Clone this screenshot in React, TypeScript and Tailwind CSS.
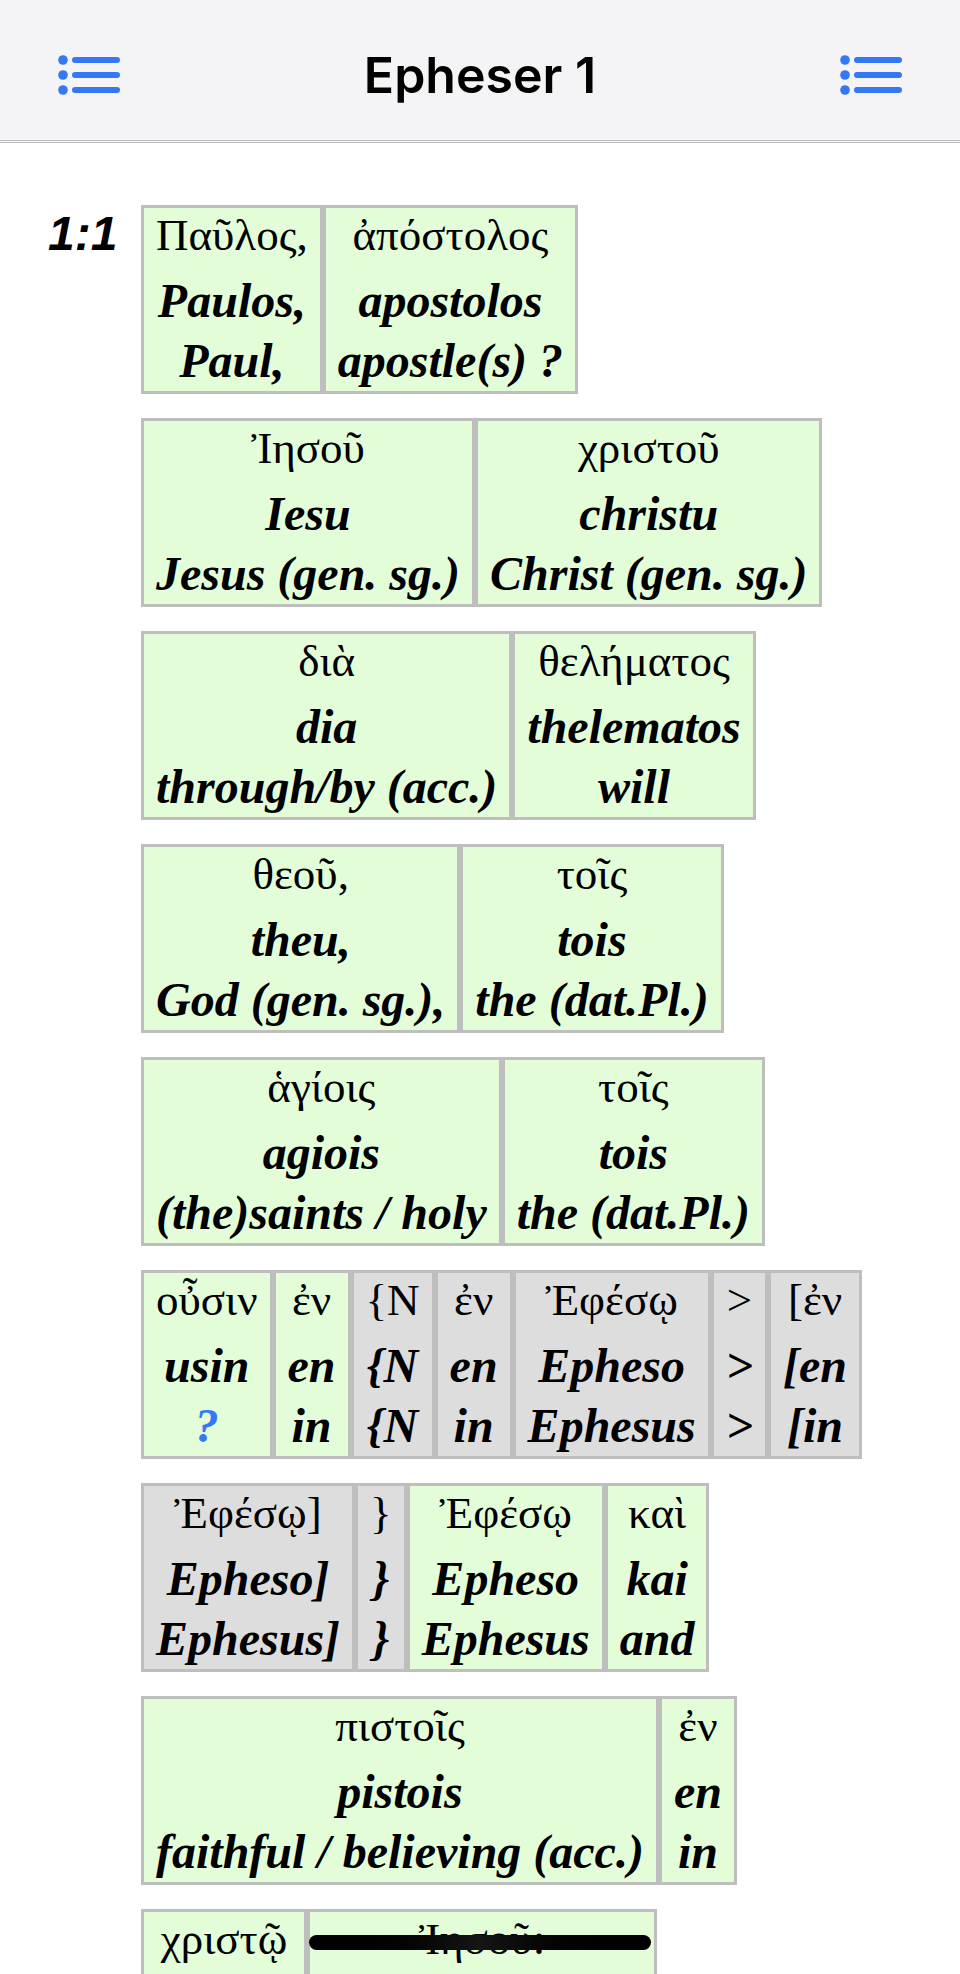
type Word = {
  greek: string;
  translit: string;
  gloss: string;
  variant?: boolean;
  link?: boolean;
};

const words: Word[] = [
  { greek: "Παῦλος,", translit: "Paulos,", gloss: "Paul," },
  { greek: "ἀπόστολος", translit: "apostolos", gloss: "apostle(s) ?" },
  { greek: "Ἰησοῦ", translit: "Iesu", gloss: "Jesus (gen. sg.)" },
  { greek: "χριστοῦ", translit: "christu", gloss: "Christ (gen. sg.)" },
  { greek: "διὰ", translit: "dia", gloss: "through/by (acc.)" },
  { greek: "θελήματος", translit: "thelematos", gloss: "will" },
  { greek: "θεοῦ,", translit: "theu,", gloss: "God (gen. sg.)," },
  { greek: "τοῖς", translit: "tois", gloss: "the (dat.Pl.)" },
  { greek: "ἁγίοις", translit: "agiois", gloss: "(the)saints / holy" },
  { greek: "τοῖς", translit: "tois", gloss: "the (dat.Pl.)" },
  { greek: "οὖσιν", translit: "usin", gloss: "?", link: true },
  { greek: "ἐν", translit: "en", gloss: "in" },
  { greek: "{N", translit: "{N", gloss: "{N", variant: true },
  { greek: "ἐν", translit: "en", gloss: "in", variant: true },
  { greek: "Ἐφέσῳ", translit: "Epheso", gloss: "Ephesus", variant: true },
  { greek: ">", translit: ">", gloss: ">", variant: true },
  { greek: "[ἐν", translit: "[en", gloss: "[in", variant: true },
  { greek: "Ἐφέσῳ]", translit: "Epheso]", gloss: "Ephesus]", variant: true },
  { greek: "}", translit: "}", gloss: "}", variant: true },
  { greek: "Ἐφέσῳ", translit: "Epheso", gloss: "Ephesus" },
  { greek: "καὶ", translit: "kai", gloss: "and" },
  { greek: "πιστοῖς", translit: "pistois", gloss: "faithful / believing (acc.)" },
  { greek: "ἐν", translit: "en", gloss: "in" },
  { greek: "χριστῷ", translit: "christo", gloss: "Christ" },
  { greek: "Ἰησοῦ:", translit: "Iesu:", gloss: "Jesus (gen. sg.):" },
];

function ListIcon() {
  return (
    <svg viewBox="0 0 62 40" className="h-10 w-[62px]" fill="#3478f6" aria-hidden="true">
      {[5, 20, 35].map((y) => (
        <g key={y}>
          <circle cx="5" cy={y} r="4.8" />
          <rect x="14" y={y - 3} width="48" height="6" rx="3" />
        </g>
      ))}
    </svg>
  );
}

function WordCell({ word }: { word: Word }) {
  return (
    <div
      className={`border-[3px] border-[#bebebe] px-3 text-center whitespace-nowrap ${
        word.variant ? "bg-[#dddddd]" : "bg-[#e3fdd9]"
      }`}
    >
      <p lang="el" className="h-[63px] text-[45px] leading-[54px]">
        {word.greek}
      </p>
      <p className="text-[48px] leading-[60px] font-bold italic">{word.translit}</p>
      <p lang="en" className="text-[48px] leading-[60px] font-bold italic">
        {word.link ? (
          <a href="#usin" className="text-[#3478f6]">
            {word.gloss}
          </a>
        ) : (
          word.gloss
        )}
      </p>
    </div>
  );
}

export default function App() {
  return (
    <div className="flex h-screen flex-col overflow-hidden bg-white text-black">
      <header className="flex h-[143px] shrink-0 items-center justify-between border-b-3 border-double border-[#bcbcbf] bg-[#f4f4f7] px-[58px] pt-[9px]">
        <button type="button" aria-label="Books">
          <ListIcon />
        </button>
        <h1 className="font-['Inter',sans-serif] text-[50px] leading-[60px] font-semibold">Epheser 1</h1>
        <button type="button" aria-label="Chapters">
          <ListIcon />
        </button>
      </header>
      <main className="flex min-h-0 flex-1 items-start overflow-y-auto pt-[62px] pr-[72px] pl-12 [scrollbar-width:none]">
        <h2 className="w-[93px] shrink-0 font-['Liberation_Sans',sans-serif] text-[48px] leading-[58px] font-bold italic">
          1:1
        </h2>
        <div className="flex flex-1 flex-wrap gap-y-6 font-['Liberation_Serif',serif]">
          {words.map((word, i) => (
            <WordCell key={i} word={word} />
          ))}
        </div>
      </main>
      <div className="fixed bottom-6 left-1/2 h-[15px] w-[342px] -translate-x-1/2 rounded-full bg-linear-to-r from-black via-[#151515] to-black" />
    </div>
  );
}
